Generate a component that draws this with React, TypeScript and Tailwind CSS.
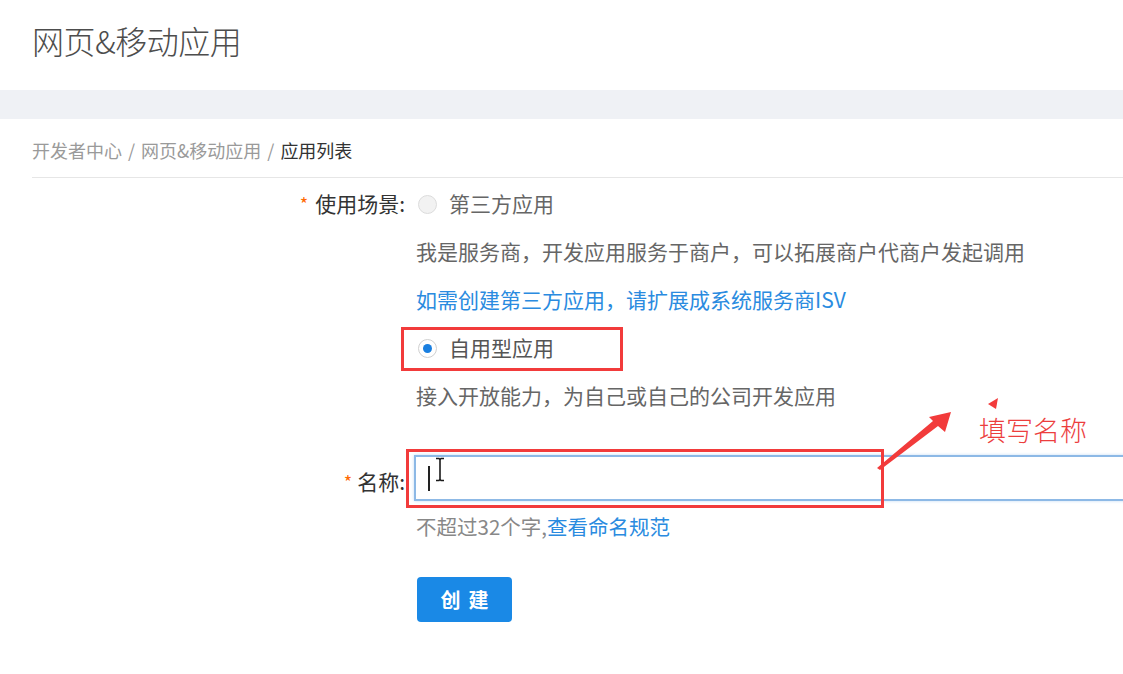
import React from 'react';

function Radio({ checked }: { checked?: boolean }) {
  return checked ? (
    <span className="w-[19px] h-[19px] rounded-full border border-[#d0d0d0] bg-white flex items-center justify-center shrink-0">
      <span className="w-[9px] h-[9px] rounded-full bg-[#1a7fe0]" />
    </span>
  ) : (
    <span className="w-[19px] h-[19px] rounded-full border border-[#dcdcdc] bg-[#f2f2f2] shrink-0" />
  );
}

function Label({ text }: { text: string }) {
  return (
    <div className="flex items-center justify-end h-12 text-[21px] text-[#333]">
      <span className="text-[#ff6a00] text-[18px] mr-[7px] -mt-[2px]">*</span>
      <span>{text}</span>
    </div>
  );
}

export default function App() {
  return (
    <div className="relative w-[1123px] h-[674px] overflow-hidden bg-white font-['Noto_Sans_CJK_SC','Noto_Sans',sans-serif]">
      <header className="h-[90px] px-8 flex items-center pb-[10px]">
        <h1 className="text-[32px] font-light text-[#4d4d4d] tracking-[-0.5px]">网页&amp;移动应用</h1>
      </header>
      <div className="h-[29px] bg-[#eff1f5]" />

      <div className="pl-8">
        <div className="h-[59px] pt-[5px] flex items-center border-b border-[#e6e6e6] text-[18px] text-[#9a9a9a]">
          <span>开发者中心</span>
          <span className="mx-[6px]">/</span>
          <span>网页&amp;移动应用</span>
          <span className="mx-[6px]">/</span>
          <span className="text-[#333]">应用列表</span>
        </div>

        <div className="grid grid-cols-[373px_1fr] gap-x-[11px] pt-[2px]">
          <Label text="使用场景:" />
          <div className="text-[21px]">
            <div className="h-12 flex items-center gap-[12px] pl-[2px] text-[#666]">
              <Radio />
              <span>第三方应用</span>
            </div>
            <div className="h-12 flex items-center text-[#666]">我是服务商，开发应用服务于商户，可以拓展商户代商户发起调用</div>
            <div className="h-12 flex items-center text-[#2a8be0]">如需创建第三方应用，请扩展成系统服务商ISV</div>
            <div className="h-12 flex items-center gap-[12px] pl-[2px] text-[#555]">
              <Radio checked />
              <span>自用型应用</span>
            </div>
            <div className="h-12 flex items-center text-[#666]">接入开放能力，为自己或自己的公司开发应用</div>
          </div>

          <div className="mt-[35px] h-[46px] flex items-center justify-end pt-[8px] text-[21px] text-[#333]">
            <span className="text-[#ff6a00] text-[18px] mr-[5px] -mt-[2px]">*</span>
            <span>名称:</span>
          </div>
          <div className="mt-[35px] -ml-[2px]">
            <div className="relative w-[720px] h-[46px] border-2 border-[#8db9e6] shadow-[0_0_3px_#c4dcf5] bg-white">
              <span className="absolute left-[12px] top-[9px] w-[2px] h-[25px] bg-[#222]" />
              <svg className="absolute left-[18px] top-[0px]" width="12" height="26" viewBox="0 0 12 26">
                <path d="M2 1.5h3l1 1 1-1h3M6 2.5v20M2 23.5h3l1-1 1 1h3" stroke="#1a1a1a" strokeWidth="1.6" fill="none" />
              </svg>
            </div>
            <div className="h-[34px] mt-[8px] ml-[2px] flex items-center text-[20.5px] text-[#888]">
              <span>不超过32个字,</span>
              <span className="text-[#2a8be0]">查看命名规范</span>
            </div>
            <button className="mt-[34px] ml-[3px] w-[95px] h-[45px] rounded-[4px] bg-[#1a89e6] text-white text-[20px] font-bold tracking-[8px] pl-[8px]">
              创建
            </button>
          </div>
        </div>
      </div>

      {/* annotations */}
      <div className="absolute left-[401px] top-[327px] w-[222px] h-[44px] border-[3px] border-[#f23b3b]" />
      <div className="absolute left-[406px] top-[449px] w-[478px] h-[59px] border-[3px] border-[#f23b3b]" />
      <svg className="absolute left-0 top-0 pointer-events-none" width="1123" height="674">
        <polygon points="877,468 933,421 929,417 951,412 945,432 938,426 880,470" fill="#f23b3b" />
        <polygon points="988,404 998,398 996,409" fill="#f23b3b" />
      </svg>
      <div className="absolute left-[979px] top-[416px] text-[27px] leading-none text-[#ec3e3e] font-light">填写名称</div>
    </div>
  );
}
